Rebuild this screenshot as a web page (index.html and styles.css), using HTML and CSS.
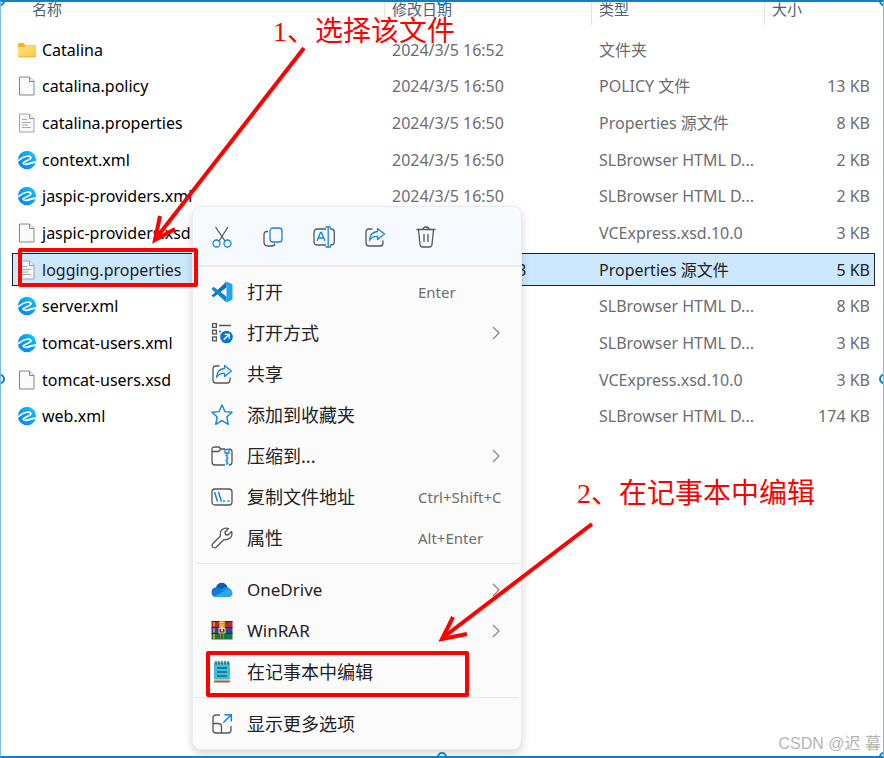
FILE: index.html
```html
<!DOCTYPE html>
<html lang="zh-CN">
<head>
    <meta charset="UTF-8">
    <meta name="viewport" content="width=device-width, initial-scale=1.0">
    <title>选择 logging.properties</title>
    <link rel="stylesheet" href="styles.css">
</head>
<body>
    <!-- Shared icons -->
    <svg class="icon-defs" aria-hidden="true">
        <defs>
            <linearGradient id="folderFill" x1="0" y1="0" x2="1" y2="1">
                <stop offset="0" stop-color="#ffe28f"/>
                <stop offset="1" stop-color="#ffc83a"/>
            </linearGradient>
            <linearGradient id="browserFill" x1="0" y1="1" x2="1" y2="0">
                <stop offset="0" stop-color="#0a7cf5"/>
                <stop offset="0.6" stop-color="#08a5f5"/>
                <stop offset="1" stop-color="#12d6fa"/>
            </linearGradient>
            <symbol id="folder" viewBox="0 0 20 20">
                <path d="M1 4.5Q1 3 2.200 3H6.500L8.500 5H18Q19 5 19 6V10H1Z" fill="#f5b31d"/>
                <path d="M1 7H7L8.700 5.200H18Q19 5.200 19 6.200V16Q19 17.200 18 17.200H2Q1 17.200 1 16Z" fill="url(#folderFill)"/>
                <path d="M1.300 16.800H18.700" stroke="#e7ab2d" stroke-width="0.800"/>
            </symbol>
            <symbol id="file" viewBox="0 0 20 20">
                <path d="M2.500 1H12.500L17 5.500V19H2.500Z" fill="#fafafa" stroke="#858585"/>
                <path d="M12.500 1V5.500H17" fill="#ececec" stroke="#858585"/>
            </symbol>
            <symbol id="textfile" viewBox="0 0 20 20">
                <path d="M2.500 1H12.500L17 5.500V19H2.500Z" fill="#f8f8f8" stroke="#a5a5a5"/>
                <path d="M12.500 1V5.500H17" fill="#ececec" stroke="#999"/>
                <path d="M5 6.500H10M5 9.500H14M5 12H11M5 14.500H14" stroke="#aaa"/>
            </symbol>
            <symbol id="browser" viewBox="0 0 20 20">
                <circle cx="10" cy="10" r="9.200" fill="url(#browserFill)"/>
                <path d="M0 10.800C3 10.300 3.800 8.400 6.500 7.200C9 6.100 12.800 5.700 13.800 7.200C14.800 9.300 9.500 10.500 5.800 12.900" fill="none" stroke="#fff" stroke-width="1.700"/>
                <path d="M5.300 12.400C8 14.800 12 12.800 14.500 11.800Q17 11 20 11.300L19.700 12.900Q16 13 13.500 14.200C9.500 16 6.500 15.200 5 13.200Z" fill="#fff"/>
            </symbol>
            <symbol id="share" viewBox="0 0 22 22">
                <path d="M8.500 3H5Q2 3 2 6V17Q2 20 5 20H16Q19 20 19 17V14.500" fill="none" stroke="#555" stroke-width="1.300"/>
                <path d="M13.500 2.500L20.500 8L13.500 13.500V10.500Q8.500 10 5.500 14.500Q6 6 13.500 5.500Z" fill="#f5fbff" stroke="#1683d8" stroke-width="1.300" stroke-linejoin="round"/>
            </symbol>
            <symbol id="chevron" viewBox="0 0 8 14">
                <path d="M1 1L7 7L1 13" fill="none" stroke="#808080" stroke-width="1.100"/>
            </symbol>
        </defs>
    </svg>

    <div class="capture">
        <div class="file-list">
            <table class="files">
                <colgroup>
                    <col class="col-name">
                    <col class="col-date">
                    <col class="col-type">
                    <col class="col-size">
                </colgroup>
                <thead>
                    <tr>
                        <th><span class="head-label">名称</span></th>
                        <th><span class="head-label">修改日期</span></th>
                        <th><span class="head-label">类型</span></th>
                        <th><span class="head-label">大小</span></th>
                    </tr>
                </thead>
                <tbody>
                    <tr>
                        <td><span class="file-name"><svg class="file-icon"><use href="#folder"/></svg>Catalina</span></td>
                        <td>2024/3/5 16:52</td>
                        <td>文件夹</td>
                        <td></td>
                    </tr>
                    <tr>
                        <td><span class="file-name"><svg class="file-icon"><use href="#file"/></svg>catalina.policy</span></td>
                        <td>2024/3/5 16:50</td>
                        <td>POLICY 文件</td>
                        <td>13 KB</td>
                    </tr>
                    <tr>
                        <td><span class="file-name"><svg class="file-icon"><use href="#textfile"/></svg>catalina.properties</span></td>
                        <td>2024/3/5 16:50</td>
                        <td>Properties 源文件</td>
                        <td>8 KB</td>
                    </tr>
                    <tr>
                        <td><span class="file-name"><svg class="file-icon"><use href="#browser"/></svg>context.xml</span></td>
                        <td>2024/3/5 16:50</td>
                        <td>SLBrowser HTML D...</td>
                        <td>2 KB</td>
                    </tr>
                    <tr>
                        <td><span class="file-name"><svg class="file-icon"><use href="#browser"/></svg>jaspic-providers.xml</span></td>
                        <td>2024/3/5 16:50</td>
                        <td>SLBrowser HTML D...</td>
                        <td>2 KB</td>
                    </tr>
                    <tr>
                        <td><span class="file-name"><svg class="file-icon"><use href="#file"/></svg>jaspic-providers.xsd</span></td>
                        <td></td>
                        <td>VCExpress.xsd.10.0</td>
                        <td>3 KB</td>
                    </tr>
                    <tr class="selected">
                        <td><span class="file-name"><svg class="file-icon"><use href="#textfile"/></svg>logging.properties</span></td>
                        <td>2024/10/3 7:03:53</td>
                        <td>Properties 源文件</td>
                        <td>5 KB</td>
                    </tr>
                    <tr>
                        <td><span class="file-name"><svg class="file-icon"><use href="#browser"/></svg>server.xml</span></td>
                        <td></td>
                        <td>SLBrowser HTML D...</td>
                        <td>8 KB</td>
                    </tr>
                    <tr>
                        <td><span class="file-name"><svg class="file-icon"><use href="#browser"/></svg>tomcat-users.xml</span></td>
                        <td></td>
                        <td>SLBrowser HTML D...</td>
                        <td>3 KB</td>
                    </tr>
                    <tr>
                        <td><span class="file-name"><svg class="file-icon"><use href="#file"/></svg>tomcat-users.xsd</span></td>
                        <td></td>
                        <td>VCExpress.xsd.10.0</td>
                        <td>3 KB</td>
                    </tr>
                    <tr>
                        <td><span class="file-name"><svg class="file-icon"><use href="#browser"/></svg>web.xml</span></td>
                        <td></td>
                        <td>SLBrowser HTML D...</td>
                        <td>174 KB</td>
                    </tr>
                </tbody>
            </table>
        </div>

        <div class="context-menu">
            <div class="quick-actions">
                <button type="button" class="quick-btn" aria-label="剪切">
                    <svg class="menu-icon" viewBox="0 0 22 22" fill="none" stroke-width="1.300">
                        <path d="M4.500 1L14 15M17 1L8 15" stroke="#555"/>
                        <circle cx="5.500" cy="17.500" r="3.500" stroke="#1683d8"/>
                        <circle cx="16.500" cy="17.500" r="3.500" stroke="#1683d8"/>
                    </svg>
                </button>
                <button type="button" class="quick-btn" aria-label="复制">
                    <svg class="menu-icon" viewBox="0 0 22 22" fill="none" stroke-width="1.300">
                        <path d="M6 5.500H5Q2 5.500 2 8.500V16Q2 20 6 20H10Q12.500 20 13 17.500" stroke="#555"/>
                        <rect x="8" y="2" width="12" height="14" rx="3" stroke="#1683d8"/>
                    </svg>
                </button>
                <button type="button" class="quick-btn" aria-label="重命名">
                    <svg class="menu-icon" viewBox="0 0 22 22" fill="none" stroke-width="1.300">
                        <path d="M13 3H4.500Q1 3 1 6.500V15.500Q1 19 4.500 19H13M17 3H18Q21.300 3 21.300 6.500V15.500Q21.300 19 18 19H17" stroke="#555"/>
                        <path d="M4 15L7.500 6.500H8.500L12 15M5.300 12H10.700M12.500 1H18M15.200 1V21M12.500 21H18" stroke="#1683d8"/>
                    </svg>
                </button>
                <button type="button" class="quick-btn" aria-label="共享">
                    <svg class="menu-icon"><use href="#share"/></svg>
                </button>
                <button type="button" class="quick-btn" aria-label="删除">
                    <svg class="menu-icon" viewBox="0 0 22 22" fill="none" stroke="#555" stroke-width="1.300">
                        <path d="M1.500 3.500H20.500M8 3.500Q8 1 11 1T14 3.500M3.500 3.500L5 18.500Q5.200 21 7.500 21H14.500Q16.800 21 17 18.500L18.500 3.500M9 8V16M13 8V16"/>
                    </svg>
                </button>
            </div>

            <div class="menu-group">
                <button type="button" class="menu-item">
                    <svg class="menu-icon" viewBox="0 0 22 22">
                        <path d="M15.500 0.500L2.500 13L0.500 14.500L2.500 16.300L15.500 6.500Z" fill="#0873b5"/>
                        <path d="M15.500 21.500L0.500 8L2.500 5.800L15.500 15.500Z" fill="#0b86d0"/>
                        <path d="M15.500 0.500L21.500 3.200V18.800L15.500 21.500Z" fill="#23a5ee"/>
                    </svg>
                    <span class="menu-label">打开</span>
                    <span class="shortcut">Enter</span>
                </button>
                <button type="button" class="menu-item">
                    <svg class="menu-icon" viewBox="0 0 22 22" fill="none" stroke="#555" stroke-width="1.300">
                        <rect x="1.600" y="1.600" width="3.800" height="3.800"/>
                        <rect x="1.600" y="8.200" width="3.800" height="3.800"/>
                        <rect x="1.600" y="15" width="3.800" height="3.800"/>
                        <path d="M8 3.500H20M8 9.500H10"/>
                        <circle cx="15.500" cy="15" r="6.300" fill="#0876d1" stroke="none"/>
                        <path d="M12.700 17.800L18 12.500M13.700 12.300H18.200V16.800" stroke="#fff"/>
                    </svg>
                    <span class="menu-label">打开方式</span>
                    <svg class="chevron"><use href="#chevron"/></svg>
                </button>
                <button type="button" class="menu-item">
                    <svg class="menu-icon"><use href="#share"/></svg>
                    <span class="menu-label">共享</span>
                </button>
                <button type="button" class="menu-item">
                    <svg class="menu-icon" viewBox="0 0 22 22" fill="none" stroke="#1683d8" stroke-width="1.400" stroke-linejoin="round">
                        <path d="M11 1L14 7.600L21 8.300L15.800 13L17.300 20.300L11 16.700L4.700 20.300L6.200 13L1 8.300L8 7.600Z"/>
                    </svg>
                    <span class="menu-label">添加到收藏夹</span>
                </button>
                <button type="button" class="menu-item">
                    <svg class="menu-icon" viewBox="0 0 22 22" fill="none" stroke="#555" stroke-width="1.300">
                        <path d="M14 4H10L8 2H3.500Q1 2 1 4.500V17Q1 20 4 20H14M18 4Q21 4 21 7V17Q21 20 18 20M1 6.500H7.500L10 4"/>
                        <path d="M14 4.500H18V8H14ZM16 8V20M14.500 10.500H16M16 13H17.500M14.500 15.500H16M16 18H17.500" stroke="#1683d8"/>
                    </svg>
                    <span class="menu-label">压缩到...</span>
                    <svg class="chevron"><use href="#chevron"/></svg>
                </button>
                <button type="button" class="menu-item">
                    <svg class="menu-icon" viewBox="0 0 22 22" fill="none" stroke="#555" stroke-width="1.300">
                        <rect x="1" y="3" width="20" height="16" rx="3"/>
                        <path d="M3.500 6L6.500 15.500M7.500 6L10.500 15.500M12 15H14M16.500 15H18.500" stroke="#1683d8" stroke-width="1.500"/>
                    </svg>
                    <span class="menu-label">复制文件地址</span>
                    <span class="shortcut">Ctrl+Shift+C</span>
                </button>
                <button type="button" class="menu-item">
                    <svg class="menu-icon" viewBox="0 0 22 22" fill="none" stroke="#555" stroke-width="1.300" stroke-linejoin="round">
                        <path d="M17.500 1.500Q14 0.200 11.200 2.500Q8.500 5 9.500 9L1.700 16.800Q0.500 18.500 1.800 20.200Q3.500 21.500 5.200 20.300L13 12.500Q16.500 13.500 19.500 10.800Q21.800 8 20.500 4.500L17 8L14.500 7.500L14 5Z"/>
                    </svg>
                    <span class="menu-label">属性</span>
                    <span class="shortcut">Alt+Enter</span>
                </button>
            </div>

            <div class="menu-group">
                <button type="button" class="menu-item">
                    <svg class="menu-icon" viewBox="0 0 22 22">
                        <path d="M5 8.500C5.500 5.500 8 3.800 10.800 3.800C13.600 3.800 15.800 5.500 16.500 8L13 13L4 11Z" fill="#0b5db8"/>
                        <path d="M5 18Q0.500 18 0.500 13.300Q0.500 8.500 5.300 8.200Q8 8 10.500 10L16 17Z" fill="#1478d4"/>
                        <path d="M10 10.500Q13 7.500 17 8.300Q18.500 9.500 21 11.500L15 15Z" fill="#1990e2"/>
                        <path d="M3 17.300L15.500 10.900Q17.500 9.900 19.500 11Q21.500 12.200 21.500 14.300Q21.500 18 17.800 18H5Q4 18 3 17.300Z" fill="#28a8ea"/>
                    </svg>
                    <span class="menu-label latin">OneDrive</span>
                    <svg class="chevron"><use href="#chevron"/></svg>
                </button>
                <button type="button" class="menu-item">
                    <svg class="menu-icon" viewBox="0 0 22 22">
                        <rect x="0.500" y="1" width="21" height="6" fill="#b22a35"/>
                        <rect x="0.500" y="7" width="21" height="6" fill="#3b3e96"/>
                        <rect x="0.500" y="13" width="21" height="6.500" fill="#167743"/>
                        <path d="M0.500 1.500H21.500M0.500 7.500H21.500M0.500 13.500H21.500" stroke="#352331"/>
                        <path d="M3 2V6.500M3 8V12.500M3 14V19" stroke="#e4ad22" stroke-width="1.500"/>
                        <rect x="8" y="1" width="6" height="12" fill="#d8982a"/>
                        <path d="M9 2.500H13M9 5H13" stroke="#f6d052"/>
                        <rect x="8" y="8.500" width="6" height="4.500" fill="#5b3a23" stroke="#efdcb5"/>
                        <path d="M11 6V11.500" stroke="#fff2b0" stroke-width="1.500"/>
                        <path d="M9.500 14V18.500M12.500 14V18.500" stroke="#b87916"/>
                    </svg>
                    <span class="menu-label latin">WinRAR</span>
                    <svg class="chevron"><use href="#chevron"/></svg>
                </button>
                <button type="button" class="menu-item">
                    <svg class="menu-icon" viewBox="0 0 22 22">
                        <path d="M3 18H19V20.500Q19 21.500 18 21.500H4Q3 21.500 3 20.500Z" fill="#a8602a"/>
                        <path d="M3 17H19V19.500H3Z" fill="#e9edee"/>
                        <rect x="3" y="1.500" width="16" height="17" rx="1" fill="#43bddc"/>
                        <path d="M5 0V3.500M8 0V3.500M11 0V3.500M14 0V3.500M17 0V3.500" stroke="#17556d" stroke-width="1.300"/>
                        <path d="M6 7H16M6 11H16M6 15H16" stroke="#126681" stroke-width="1.300"/>
                    </svg>
                    <span class="menu-label">在记事本中编辑</span>
                </button>
            </div>

            <div class="menu-group">
                <button type="button" class="menu-item">
                    <svg class="menu-icon" viewBox="0 0 22 22" fill="none" stroke="#555" stroke-width="1.300">
                        <path d="M9 2H5Q2 2 2 5V17Q2 20 5 20H17Q20 20 20 17V13M2 10.500H7Q10.500 10.500 10.500 14V20"/>
                        <path d="M12.500 9.500L20 2M13.500 1.700H20.300V8.500" stroke="#1683d8" stroke-width="1.500"/>
                    </svg>
                    <span class="menu-label">显示更多选项</span>
                </button>
            </div>
        </div>

        <!-- Step markers drawn over the window -->
        <svg class="arrows" aria-hidden="true">
            <path d="M304 48L157 237M592 524L445 636" stroke-width="4"/>
            <path d="M160 216L155 240L175 229M453 617L442 639L467 634" stroke-width="4"/>
        </svg>
        <div class="mark mark-file"></div>
        <div class="mark mark-edit"></div>
        <p class="step step-one">1、选择该文件</p>
        <p class="step step-two">2、在记事本中编辑</p>
        <p class="watermark">CSDN @迟 暮</p>

        <span class="handle top left"></span>
        <span class="handle top center"></span>
        <span class="handle top right"></span>
        <span class="handle middle left"></span>
        <span class="handle middle right"></span>
        <span class="handle bottom center"></span>
        <span class="handle bottom right"></span>
    </div>
</body>
</html>
```

FILE: styles.css
```css
* {
    margin: 0;
    padding: 0;
    box-sizing: border-box;
}
body {
    background-color: #fff;
    color: #000;
    font-family: "Noto Sans", "Noto Sans CJK SC", sans-serif;
    font-size: 16px;
}
.icon-defs {
    position: absolute;
    width: 0;
    height: 0;
}
.capture {
    position: relative;
    min-height: 100vh;
    overflow: hidden;
    border: 1px solid #78bce4;
    border-top: 2px solid #1180c3;
    border-bottom: 2px solid #1180c3;
}

/* File list */
.file-list {
    padding: 0 8px 0 11px;
}
.files {
    width: 100%;
    margin-top: -9px;
    table-layout: fixed;
    border-collapse: separate;
    border-spacing: 0 4px;
}
.col-name {
    width: 372px;
}
.col-date {
    width: 207px;
}
.col-type {
    width: 173px;
}
.files th {
    padding-bottom: 4px;
    text-align: left;
    font-size: 15px;
    font-weight: 400;
    color: #4c607a;
}
.head-label {
    display: block;
    height: 28px;
    padding-left: 7px;
    line-height: 24px;
    border-left: 1px solid #e2e2e2;
}
th:first-child .head-label {
    padding-left: 20px;
    border-left: none;
}
.files td {
    height: 33px;
    padding-left: 8px;
    line-height: 24px;
    white-space: nowrap;
    color: #6d6d6d;
}
.files tr:nth-child(3n+2) td {
    height: 32px;
}
.files td:first-child {
    padding-left: 5px;
    color: #000;
}
.files td:last-child {
    padding-right: 5px;
    text-align: right;
}
.file-name {
    display: flex;
    align-items: center;
    gap: 5px;
}
.file-icon {
    width: 20px;
    height: 20px;
}
.files .selected {
    background-color: #cce8ff;
    outline: 1px solid #222;
    outline-offset: -1px;
}
.files .selected td {
    color: #222;
}

/* Context menu */
.context-menu {
    position: absolute;
    top: 204px;
    left: 191px;
    width: 330px;
    overflow: hidden;
    background-color: #fbfbfb;
    border: 1px solid #e9ebed;
    border-radius: 9px;
    box-shadow: 0 4px 10px rgba(0, 0, 0, 0.16);
}
.quick-actions {
    display: flex;
    height: 60px;
    padding: 2px 3px 0;
    background-color: #f6fafe;
    border-bottom: 2px solid #e8eaec;
}
.quick-btn {
    display: flex;
    align-items: center;
    justify-content: center;
    width: 51px;
    background: none;
    border: none;
}
.menu-icon {
    width: 22px;
    height: 22px;
}
.menu-group {
    margin: 0 3px;
    padding: 4px 0 5px;
}
.menu-group + .menu-group {
    padding-top: 5px;
    border-top: 1px solid #e5e5e5;
}
.menu-item {
    display: grid;
    grid-template-columns: 22px 1fr 88px;
    column-gap: 14px;
    align-items: center;
    width: 100%;
    height: 41px;
    padding: 0 12px 0 15px;
    background: none;
    border: none;
    font-family: inherit;
    text-align: left;
    color: #222;
}
.menu-label {
    font-size: 18px;
    line-height: 24px;
    white-space: nowrap;
}
.menu-label.latin {
    font-size: 17px;
}
.shortcut {
    font-size: 15px;
    line-height: 24px;
    white-space: nowrap;
    color: #6d6d6d;
}
.chevron {
    justify-self: end;
    width: 8px;
    height: 14px;
    margin-right: 6px;
}

/* Annotations */
.arrows {
    position: absolute;
    top: -2px;
    left: -1px;
    width: 884px;
    height: 758px;
    fill: none;
    stroke: #f00;
}
.mark {
    position: absolute;
    border: 4px solid #f00;
    border-radius: 2px;
}
.mark-file {
    top: 246px;
    left: 17px;
    width: 180px;
    height: 39px;
}
.mark-edit {
    top: 649px;
    left: 205px;
    width: 263px;
    height: 46px;
}
.step {
    position: absolute;
    font-family: "Liberation Serif", "Noto Sans CJK SC", serif;
    font-size: 28px;
    line-height: 40px;
    white-space: nowrap;
    color: #f00;
}
.step-one {
    top: 10px;
    left: 272px;
}
.step-two {
    top: 472px;
    left: 576px;
}
.watermark {
    position: absolute;
    right: 2px;
    bottom: 0;
    font-family: "Liberation Sans", "Noto Sans CJK SC", sans-serif;
    font-size: 16px;
    line-height: 24px;
    color: #b4b4b4;
}

/* Frame handles */
.handle {
    position: absolute;
    width: 10px;
    height: 10px;
    background-color: #fff;
    border: 2px solid #1180c3;
    border-radius: 50%;
}
.handle.top {
    top: -6px;
}
.handle.middle {
    top: 50%;
    margin-top: -5px;
}
.handle.bottom {
    bottom: -6px;
}
.handle.left {
    left: -6px;
}
.handle.center {
    left: 50%;
    margin-left: -5px;
}
.handle.right {
    right: -6px;
}
```
